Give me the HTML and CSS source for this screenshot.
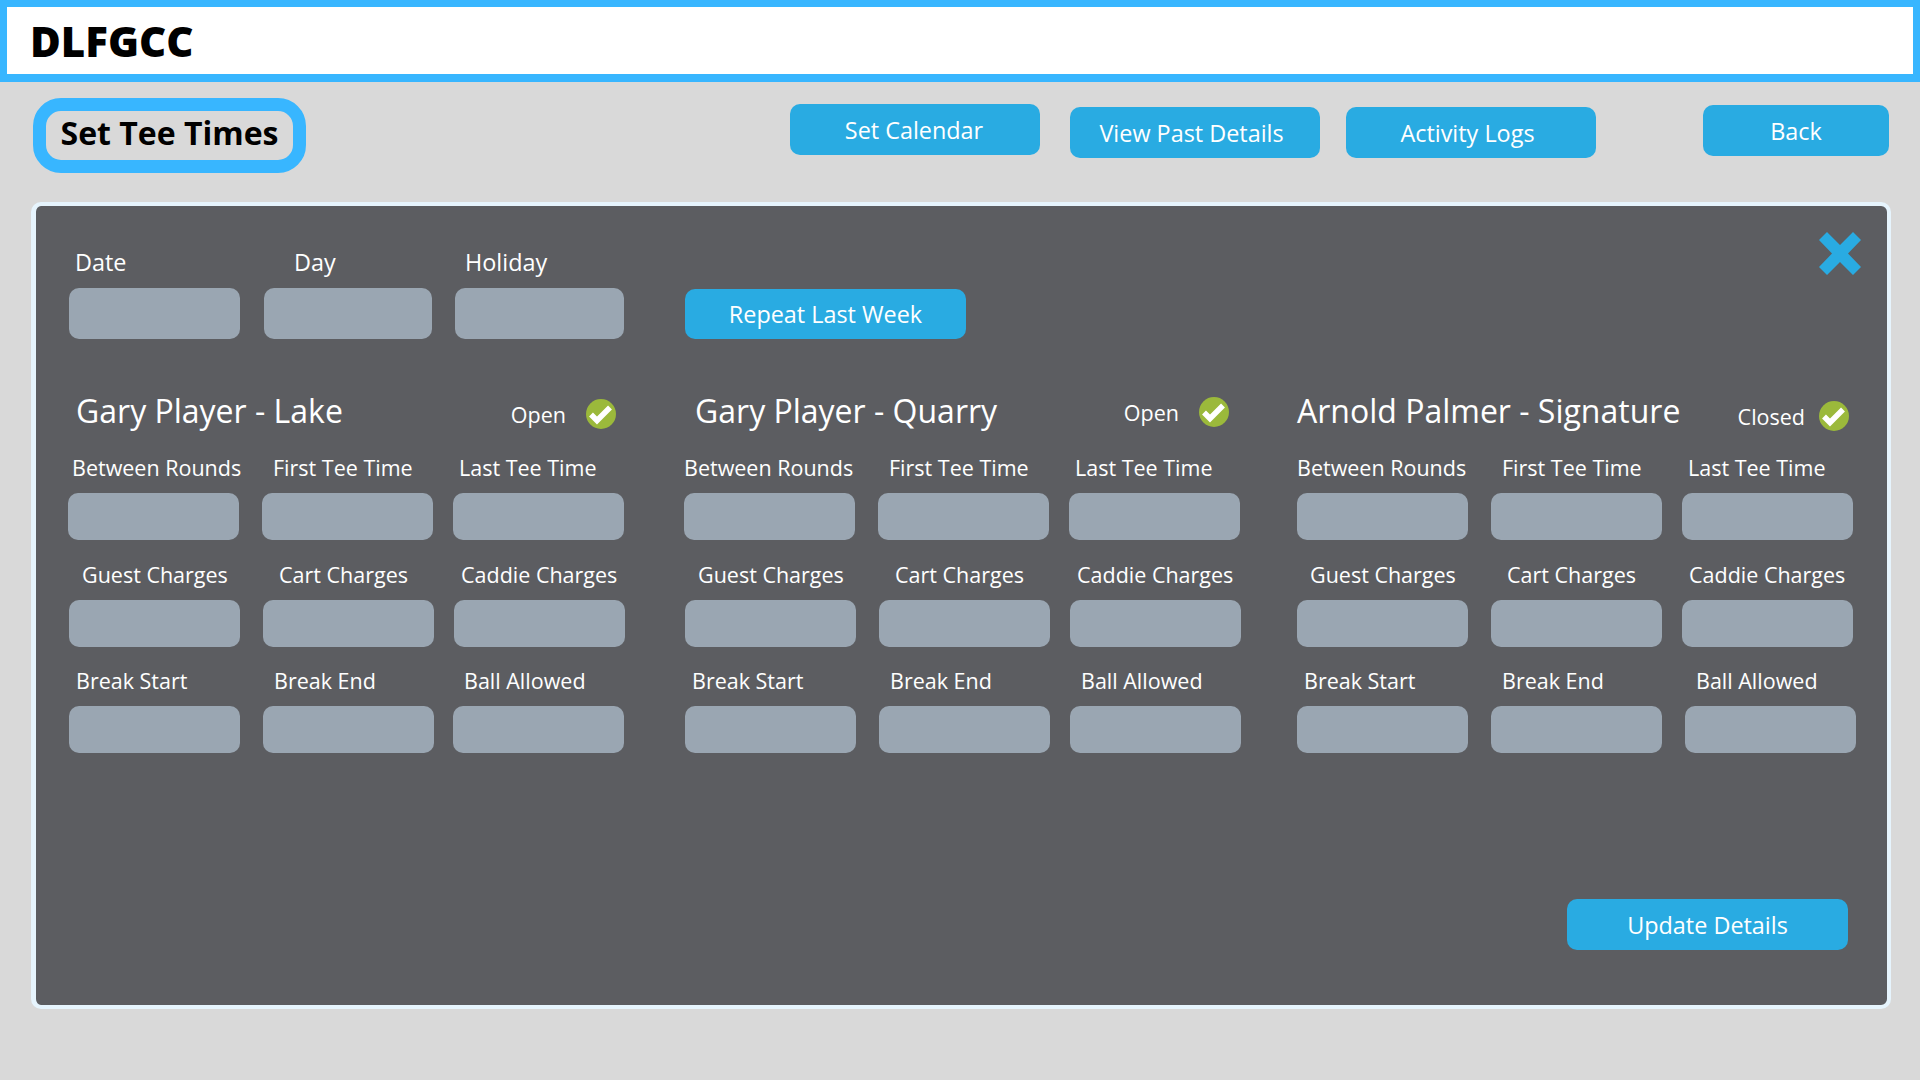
FILE: index.html
```html
<!DOCTYPE html>
<html>
<head>
    <meta charset="UTF-8">
    <title>Set Tee Times</title>
    <link rel="stylesheet" href="styles.css">
</head>
<body>
    <div id="header"><span class="brand">DLFGCC</span></div>

    <div id="toolbar">
        <div class="page-title"><span>Set Tee Times</span></div>
        <div class="nav">
            <button class="btn nav-btn btn-calendar">Set Calendar</button>
            <button class="btn nav-btn btn-past">View Past Details</button>
            <button class="btn nav-btn btn-logs">Activity Logs</button>
        </div>
        <button class="btn btn-back">Back</button>
    </div>

    <div id="panel">
        <svg class="close" viewBox="0 0 42 43" width="42" height="43">
            <path d="M8 0 L21 13 L34 0 L42 8 L29 21.5 L42 35 L34 43 L21 30 L8 43 L0 35 L13 21.5 L0 8 Z" fill="#29abe2"/>
        </svg>

        <div class="date-row">
            <div class="field f-date"><label class="lbl">Date</label><div class="box box-tall"></div></div>
            <div class="field f-day"><label class="lbl">Day</label><div class="box box-tall"></div></div>
            <div class="field f-holiday"><label class="lbl">Holiday</label><div class="box box-tall"></div></div>
            <button class="btn btn-repeat">Repeat Last Week</button>
        </div>

        <div class="courses">
            <div class="course course-lake">
                <div class="course-head">
                    <h2 class="course-name">Gary Player - Lake</h2>
                    <span class="status">Open</span>
                    <svg class="check" viewBox="0 0 30 30" width="30" height="30"><circle cx="15" cy="15" r="15" fill="#9bb93b"/><path d="M5 15.5 L11 21.5 L24 8.5" fill="none" stroke="#fff" stroke-width="5.5"/></svg>
                </div>
                <div class="row row-times">
                    <div class="field"><label class="lbl l-between">Between Rounds</label><div class="box"></div></div>
                    <div class="field"><label class="lbl l-first">First Tee Time</label><div class="box"></div></div>
                    <div class="field"><label class="lbl l-last">Last Tee Time</label><div class="box"></div></div>
                </div>
                <div class="row row-charges">
                    <div class="field"><label class="lbl l-guest">Guest Charges</label><div class="box"></div></div>
                    <div class="field"><label class="lbl l-cart">Cart Charges</label><div class="box"></div></div>
                    <div class="field"><label class="lbl l-caddie">Caddie Charges</label><div class="box"></div></div>
                </div>
                <div class="row row-break">
                    <div class="field"><label class="lbl l-start">Break Start</label><div class="box"></div></div>
                    <div class="field"><label class="lbl l-end">Break End</label><div class="box"></div></div>
                    <div class="field"><label class="lbl l-ball">Ball Allowed</label><div class="box"></div></div>
                </div>
            </div>

            <div class="course course-quarry">
                <div class="course-head">
                    <h2 class="course-name">Gary Player - Quarry</h2>
                    <span class="status">Open</span>
                    <svg class="check" viewBox="0 0 30 30" width="30" height="30"><circle cx="15" cy="15" r="15" fill="#9bb93b"/><path d="M5 15.5 L11 21.5 L24 8.5" fill="none" stroke="#fff" stroke-width="5.5"/></svg>
                </div>
                <div class="row row-times">
                    <div class="field"><label class="lbl l-between">Between Rounds</label><div class="box"></div></div>
                    <div class="field"><label class="lbl l-first">First Tee Time</label><div class="box"></div></div>
                    <div class="field"><label class="lbl l-last">Last Tee Time</label><div class="box"></div></div>
                </div>
                <div class="row row-charges">
                    <div class="field"><label class="lbl l-guest">Guest Charges</label><div class="box"></div></div>
                    <div class="field"><label class="lbl l-cart">Cart Charges</label><div class="box"></div></div>
                    <div class="field"><label class="lbl l-caddie">Caddie Charges</label><div class="box"></div></div>
                </div>
                <div class="row row-break">
                    <div class="field"><label class="lbl l-start">Break Start</label><div class="box"></div></div>
                    <div class="field"><label class="lbl l-end">Break End</label><div class="box"></div></div>
                    <div class="field"><label class="lbl l-ball">Ball Allowed</label><div class="box"></div></div>
                </div>
            </div>

            <div class="course course-signature">
                <div class="course-head">
                    <h2 class="course-name">Arnold Palmer - Signature</h2>
                    <span class="status">Closed</span>
                    <svg class="check" viewBox="0 0 30 30" width="30" height="30"><circle cx="15" cy="15" r="15" fill="#9bb93b"/><path d="M5 15.5 L11 21.5 L24 8.5" fill="none" stroke="#fff" stroke-width="5.5"/></svg>
                </div>
                <div class="row row-times">
                    <div class="field"><label class="lbl l-between">Between Rounds</label><div class="box"></div></div>
                    <div class="field"><label class="lbl l-first">First Tee Time</label><div class="box"></div></div>
                    <div class="field"><label class="lbl l-last">Last Tee Time</label><div class="box"></div></div>
                </div>
                <div class="row row-charges">
                    <div class="field"><label class="lbl l-guest">Guest Charges</label><div class="box"></div></div>
                    <div class="field"><label class="lbl l-cart">Cart Charges</label><div class="box"></div></div>
                    <div class="field"><label class="lbl l-caddie">Caddie Charges</label><div class="box"></div></div>
                </div>
                <div class="row row-break">
                    <div class="field"><label class="lbl l-start">Break Start</label><div class="box"></div></div>
                    <div class="field"><label class="lbl l-end">Break End</label><div class="box"></div></div>
                    <div class="field"><label class="lbl l-ball">Ball Allowed</label><div class="box"></div></div>
                </div>
            </div>
        </div>

        <div class="panel-foot">
            <button class="btn btn-update">Update Details</button>
        </div>
    </div>
</body>
</html>
```

FILE: styles.css
```css
* {
    box-sizing: border-box;
}
html, body {
    height: 100%;
}
body {
    margin: 0;
    background: #d9d9d9;
    font-family: "Open Sans", "Noto Sans", sans-serif;
    color: #fff;
    overflow: hidden;
}
#header {
    height: 82px;
    background: #fff;
    border: 7px solid #38b6ff;
    border-bottom-width: 8px;
    padding: 1px 0 0 23px;
    display: flex;
    align-items: center;
}
.brand {
    color: #000;
    font-size: 42px;
    font-weight: 800;
    line-height: 1;
}
#toolbar {
    display: flex;
    align-items: flex-start;
    padding: 16px 31px 0 33px;
    height: 120px;
}
.page-title {
    width: 273px;
    height: 75px;
    border: 13px solid #38b6ff;
    border-radius: 28px;
    padding-bottom: 6px;
    display: flex;
    align-items: center;
    justify-content: center;
    color: #000;
    font-size: 32px;
    font-weight: 700;
}
.nav {
    display: flex;
    margin-left: 484px;
}
.btn {
    display: block;
    border: none;
    border-radius: 10px;
    background: #29abe2;
    color: #fff;
    font-family: inherit;
    font-size: 23.4px;
    padding: 0;
    height: 51px;
}
.nav-btn {
    width: 250px;
}
.btn-calendar {
    margin-top: 6px;
    padding: 1px 2px 0 0;
}
.btn-past {
    margin: 9px 0 0 30px;
    padding: 1px 7px 0 0;
}
.btn-logs {
    margin: 9px 0 0 26px;
    padding: 1px 7px 0 0;
}
.btn-back {
    width: 186px;
    margin: 7px 0 0 auto;
}
#panel {
    position: relative;
    margin-left: 31px;
    width: 1860px;
    height: 807px;
    background: #5c5d61;
    border: 4px solid #e6f4fd;
    border-left-width: 5px;
    border-radius: 10px;
    padding: 41px 4px 0 33px;
}
.close {
    position: absolute;
    top: 26px;
    right: 26px;
}
.lbl {
    display: block;
    font-size: 21.5px;
    line-height: 27px;
    white-space: nowrap;
    margin-bottom: 12px;
}
.box {
    height: 47px;
    background: #9aa6b2;
    border-radius: 10px;
}
.box-tall {
    height: 51px;
}
.date-row {
    display: flex;
    align-items: flex-end;
}
.date-row .lbl {
    font-size: 23.4px;
    line-height: 30px;
    margin-bottom: 11px;
}
.f-date {
    width: 171px;
    margin-right: 24px;
}
.f-date .lbl {
    padding-left: 6px;
}
.f-day {
    width: 168px;
    margin-right: 23px;
}
.f-day .lbl {
    padding-left: 30px;
}
.f-holiday {
    width: 169px;
    margin-right: 61px;
}
.f-holiday .lbl {
    padding-left: 10px;
}
.btn-repeat {
    width: 281px;
    height: 50px;
    padding-bottom: 1px;
}
.courses {
    display: grid;
    grid-template-columns: 616px 612px 1fr;
    margin-top: 50px;
}
.course-head {
    display: flex;
    align-items: center;
    width: 556px;
    height: 44px;
    margin-bottom: 21px;
}
.course-name {
    margin: 0;
    font-size: 32px;
    font-weight: 400;
    line-height: 44px;
    white-space: nowrap;
    flex: 1;
}
.status {
    font-size: 21.5px;
}
.course-lake .course-name {
    padding-left: 7px;
}
.course-lake .status {
    margin-top: 6px;
}
.course-lake .check {
    margin: 6px 9px 0 20px;
}
.course-quarry .course-name {
    padding-left: 10px;
}
.course-quarry .status {
    margin-top: 2px;
}
.course-quarry .check {
    margin: 2px 12px 0 20px;
}
.course-signature .status {
    margin-top: 10px;
}
.course-signature .check {
    margin: 10px 4px 0 14px;
}
.row {
    display: flex;
    margin-bottom: 20px;
}
.row-times {
    margin-bottom: 21px;
}
.row .field {
    width: 171px;
}
.row .field:nth-child(2) {
    margin-left: 23px;
}
.row .field:nth-child(3) {
    margin-left: 20px;
}
.course-lake .row-times,
.course-quarry .row-times {
    margin-left: -1px;
}
.course-lake .row-break .field:nth-child(3) {
    margin-left: 19px;
}
.course-signature .row-break .field:nth-child(3) {
    margin-left: 23px;
}

/* labels sit at their own indent over each box */
.l-between { padding-left: 0; }
.l-first { padding-left: 11px; }
.l-last { padding-left: 6px; }
.l-guest { padding-left: 13px; }
.l-cart { padding-left: 16px; }
.l-caddie { padding-left: 7px; }
.l-start { padding-left: 7px; }
.l-end { padding-left: 11px; }
.l-ball { padding-left: 11px; }
.course-lake .l-between { padding-left: 4px; }

.panel-foot {
    position: absolute;
    right: 39px;
    bottom: 55px;
}
.btn-update {
    width: 281px;
    padding-top: 1px;
}
```
